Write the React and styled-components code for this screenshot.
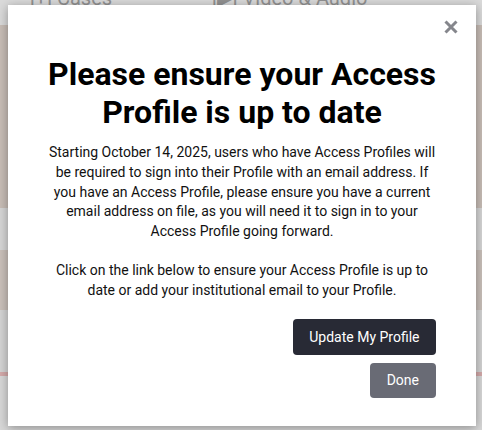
import React from "react";
import styled, { createGlobalStyle } from "styled-components";

const Global = createGlobalStyle`
  html, body { margin: 0; padding: 0; }
  body { width: 482px; height: 430px; overflow: hidden; font-family: Roboto, "Liberation Sans", sans-serif; }
`;

const Page = styled.div`
  position: relative;
  width: 482px;
  height: 430px;
  overflow: hidden;
  background: #dcdcdc;
  display: flex;
  flex-direction: column;
`;

const TopBar = styled.div`
  height: 37px;
  flex-shrink: 0;
  background: #e6e6e6;
  display: flex;
  align-items: flex-start;
  gap: 100px;
  padding-left: 30px;
  color: #9a9a9a;
  font-size: 20px;
  line-height: 1;
  margin-top: -12px;
`;

const Band = styled.div`
  height: ${(p) => p.h}px;
  flex-shrink: 0;
  background: ${(p) => p.bg};
`;

const Overlay = styled.div`
  position: absolute;
  inset: 0;
  background: rgba(0, 0, 0, 0.05);
`;

const Modal = styled.div`
  position: absolute;
  left: 8px;
  top: 5px;
  width: 468px;
  height: 421px;
  box-sizing: border-box;
  background: #fff;
  box-shadow: 0 2px 10px rgba(0, 0, 0, 0.35);
  padding: 50px 36px 0;
  display: flex;
  flex-direction: column;
  color: #000;
`;

const Close = styled.button`
  position: absolute;
  top: 10px;
  right: 13px;
  width: 24px;
  height: 24px;
  border: 0;
  padding: 0;
  background: transparent;
  display: flex;
  align-items: center;
  justify-content: center;
`;

const Title = styled.h1`
  margin: 0;
  font-family: Roboto, "Liberation Sans", sans-serif;
  font-weight: 700;
  font-size: 32px;
  line-height: 38px;
  text-align: center;
  color: #000;
`;

const Body = styled.p`
  margin: ${(p) => p.mt}px 0 0;
  font-size: 14px;
  line-height: 19.8px;
  text-align: center;
  color: #111;
`;

const Actions = styled.div`
  margin-top: 18px;
  display: flex;
  flex-direction: column;
  align-items: flex-end;
  gap: 8px;
  padding-right: 4px;
`;

const Button = styled.button`
  border: 0;
  border-radius: 4px;
  background: ${(p) => (p.secondary ? "#696b75" : "#282a35")};
  color: #fff;
  font-family: Roboto, "Liberation Sans", sans-serif;
  font-size: 14px;
  height: ${(p) => (p.secondary ? 35 : 36)}px;
  padding: 0 ${(p) => (p.secondary ? 17 : 16.5)}px;
`;

export default function App() {
  return (
    <>
      <Global />
      <Page>
        <TopBar>
          <span>[+] Cases</span>
          <span>[▶] Video &amp; Audio</span>
        </TopBar>
        <Band h={183} bg="#d3c8c0" />
        <Band h={42} bg="#e2e2e2" />
        <Band h={60} bg="#d5cbc4" />
        <Band h={62} bg="#e0e0e0" />
        <Band h={4} bg="#e0b4b4" />
        <Band h={60} bg="#e4e4e4" />
        <Overlay />
        <Modal>
          <Close aria-label="Close">
            <svg width="14" height="14" viewBox="0 0 14 14">
              <path d="M1.5 1.5 L12.5 12.5 M12.5 1.5 L1.5 12.5" stroke="#85868c" strokeWidth="3" strokeLinecap="butt" />
            </svg>
          </Close>
          <Title>Please ensure your Access Profile is up to date</Title>
          <Body mt={12}>
            Starting October 14, 2025, users who have Access Profiles will be required to sign into their
            Profile with an email address. If you have an Access Profile, please ensure you have a current
            email address on file, as you will need it to sign in to your Access Profile going forward.
          </Body>
          <Body mt={19}>
            Click on the link below to ensure your Access Profile is up to date or add your institutional
            email to your Profile.
          </Body>
          <Actions>
            <Button>Update My Profile</Button>
            <Button secondary>Done</Button>
          </Actions>
        </Modal>
      </Page>
    </>
  );
}
